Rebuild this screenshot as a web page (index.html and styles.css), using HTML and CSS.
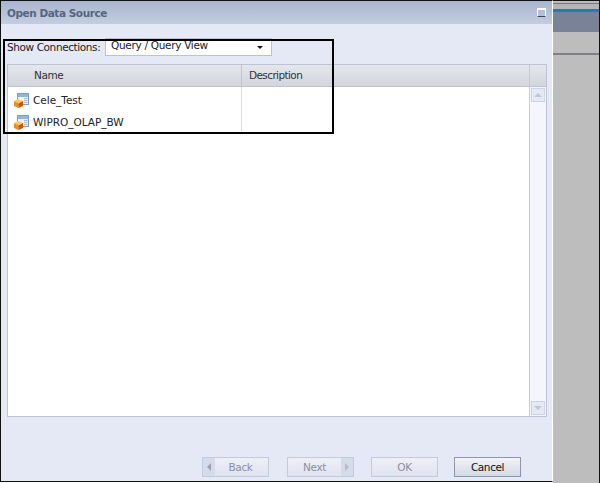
FILE: index.html
```html
<!DOCTYPE html>
<html lang="en">
<head>
<meta charset="utf-8">
<title>Open Data Source</title>
<link rel="stylesheet" href="styles.css">
</head>
<body>
<svg class="defs" width="0" height="0" aria-hidden="true">
  <symbol id="conn" viewBox="0 0 16 16">
    <rect x="3.500" y="1.500" width="11" height="11" fill="#eef3fb" stroke="#7f9cc2"/>
    <rect x="4" y="2" width="10" height="3" fill="#8fb4de"/>
    <rect x="10" y="6" width="3.500" height="1" fill="#a9bad0"/>
    <rect x="10" y="8" width="3.500" height="1" fill="#a9bad0"/>
    <rect x="10" y="10" width="3.500" height="1" fill="#a9bad0"/>
    <path d="M0 9 L4 7 L9 9 L4.500 11.500 Z" fill="#fcc95f"/>
    <path d="M0 9 L4.500 11.500 V16 L0 14 Z" fill="#f28c12"/>
    <path d="M9 9 L4.500 11.500 V16 L9 14 Z" fill="#c9560f"/>
  </symbol>
</svg>
<div class="screen">
  <main class="dialog">
    <header class="titlebar">
      <h1 class="title">Open Data Source</h1>
      <span class="maximize"></span>
    </header>
    <div class="body">
      <div class="connections">
        <label class="conn-label">Show Connections:</label>
        <div class="select">
          <span>Query / Query View</span>
          <span class="caret"></span>
        </div>
      </div>
      <div class="table">
        <div class="thead">
          <div class="th th-name">Name</div>
          <div class="th th-desc">Description</div>
          <div class="th th-end"></div>
        </div>
        <div class="tbody">
          <div class="rows">
            <div class="grid-line"></div>
            <div class="row">
              <svg class="row-icon"><use href="#conn"/></svg>
              <span>Cele_Test</span>
            </div>
            <div class="row">
              <svg class="row-icon"><use href="#conn"/></svg>
              <span>WIPRO_OLAP_BW</span>
            </div>
          </div>
          <div class="scrollbar">
            <div class="scroll-btn"><span class="arrow-up"></span></div>
            <div class="scroll-btn"><span class="arrow-down"></span></div>
          </div>
        </div>
      </div>
      <footer class="footer">
        <button class="btn btn-back" disabled><span class="btn-cap"><span class="arrow-left"></span></span><span class="btn-text">Back</span></button>
        <button class="btn btn-next" disabled><span class="btn-text">Next</span><span class="btn-cap"><span class="arrow-right"></span></span></button>
        <button class="btn btn-ok" disabled><span class="btn-text">OK</span></button>
        <button class="btn btn-cancel"><span class="btn-text">Cancel</span></button>
      </footer>
    </div>
  </main>
  <aside class="side">
    <div class="side-bar"></div>
    <div class="side-rule"></div>
  </aside>
</div>
<div class="annotation"></div>
</body>
</html>
```
FILE: styles.css
```css
* { box-sizing: border-box; }
html, body { margin: 0; padding: 0; }
body {
  width: 600px;
  height: 483px;
  overflow: hidden;
  position: relative;
  background: #fff;
  font-family: "DejaVu Sans", "Liberation Sans", sans-serif;
  font-size: 10px;
  color: #222;
}
.defs { position: absolute; }
.screen { display: flex; width: 600px; height: 483px; }
.dialog {
  width: 553px;
  height: 482px;
  display: flex;
  flex-direction: column;
  background: #e5e9f5;
  border-top: 1px solid #111;
  border-left: 1px solid #111;
  border-bottom: 1px solid #111;
  border-right: 1px solid #fff;
}
.titlebar {
  height: 23px;
  flex: none;
  display: flex;
  align-items: center;
  justify-content: space-between;
  padding: 0 6px 0 6px;
  background: linear-gradient(#a9b5cf, #c4cde0);
}
.title {
  margin: 0;
  font-size: 10.500px;
  font-weight: bold;
  color: #56657f;
  letter-spacing: -0.45px;
}
.maximize {
  width: 9px;
  height: 9px;
  border: 1px solid #fff;
  border-top-width: 2px;
  border-bottom: 1px solid #445;
  background: #b4bfd6;
}
.body {
  flex: 1;
  display: flex;
  flex-direction: column;
  padding: 14px 6px 0 6px;
}
.connections { display: flex; align-items: flex-start; height: 18px; }
.conn-label { font-size: 10.500px; padding-top: 3px; width: 98px; letter-spacing: -0.4px; }
.select {
  width: 167px;
  height: 18px;
  background: #fff;
  border: 1px solid #b9c2d6;
  display: flex;
  justify-content: space-between;
  font-size: 10.500px;
  letter-spacing: -0.3px;
  padding: 0 8px 0 5px;
}
.caret {
  margin-top: 7px;
  border-left: 3px solid transparent;
  border-right: 3px solid transparent;
  border-top: 3px solid #111;
}
.table {
  margin-top: 8px;
  width: 540px;
  height: 353px;
  border: 1px solid #bcc4d4;
  display: flex;
  flex-direction: column;
  background: #fff;
}
.thead {
  display: flex;
  height: 22px;
  flex: none;
  background: linear-gradient(#e5e7ee, #d2d5db);
  border-bottom: 1px solid #bcc4d4;
}
.th {
  font-size: 10.500px;
  letter-spacing: -0.4px;
  padding-top: 4px;
  color: #333;
}
.th-name { width: 234px; padding-left: 26px; border-right: 1px solid #bcc4d4; }
.th-desc { width: 288px; padding-left: 7px; border-right: 1px solid #c4cbd8; letter-spacing: -0.6px; }
.th-end { flex: 1; }
.tbody { flex: 1; display: flex; min-height: 0; }
.rows { position: relative; flex: 1; padding-top: 2px; }
.grid-line {
  position: absolute;
  left: 233px;
  top: 0;
  width: 1px;
  height: 44px;
  background: #d5dae4;
}
.row {
  height: 22px;
  display: flex;
  align-items: center;
  gap: 3px;
  padding-left: 6px;
  font-size: 10.500px;
  letter-spacing: -0.02px;
  color: #222;
}
.row-icon { width: 16px; height: 16px; flex: none; }
.scrollbar {
  width: 17px;
  flex: none;
  background: #f4f6fd;
  border-left: 1px solid #c4cbd8;
  display: flex;
  flex-direction: column;
  justify-content: space-between;
  padding: 1px;
}
.scroll-btn {
  height: 14px;
  background: #e5e9f5;
  border: 1px solid #ccd3e2;
  display: flex;
  align-items: center;
  justify-content: center;
}
.arrow-up {
  border-left: 4px solid transparent;
  border-right: 4px solid transparent;
  border-bottom: 4px solid #c3c7d0;
}
.arrow-down {
  border-left: 4px solid transparent;
  border-right: 4px solid transparent;
  border-top: 4px solid #c3c7d0;
}
.footer {
  display: flex;
  margin-top: 40px;
  padding-left: 195px;
}
.btn {
  width: 67px;
  height: 20px;
  padding: 0;
  display: flex;
  align-items: center;
  font-family: inherit;
  font-size: 10.500px;
  letter-spacing: -0.4px;
  color: #8a8f9c;
  border: 1px solid #c3cad9;
  background: linear-gradient(#eef0f8, #dfe3ef);
}
.btn-back { margin-right: 18px; }
.btn-next { margin-right: 17px; }
.btn-ok { margin-right: 16px; }
.btn-text { flex: 1; text-align: center; }
.btn-back .btn-text { padding-right: 2px; }
.btn-cap {
  width: 12px;
  height: 18px;
  flex: none;
  background: #d5dbe8;
  display: flex;
  align-items: center;
  justify-content: center;
}
.arrow-left {
  border-top: 4px solid transparent;
  border-bottom: 4px solid transparent;
  border-right: 4px solid #9aa2b2;
}
.arrow-right {
  border-top: 4px solid transparent;
  border-bottom: 4px solid transparent;
  border-left: 4px solid #b5bccb;
}
.btn-cancel {
  color: #111;
  border: 1px solid #8e97aa;
  background: linear-gradient(#f2f3f8, #d5d9e5);
}
.side {
  width: 47px;
  height: 483px;
  flex: none;
  background: #bdbdbd;
  border-top: 1px solid #111;
  border-right: 1px solid #111;
  padding-top: 2px;
}
.side-bar {
  height: 29px;
  background: linear-gradient(#77777c 0, #77777c 1px, #b5b5b8 1px, #b5b5b8 6px, #1f7fb5 6px, #1f7fb5 9px, #7a8298 9px);
}
.side-rule {
  height: 2px;
  margin-top: 21px;
  background: #7f7f86;
}
.annotation {
  position: absolute;
  left: 3px;
  top: 39px;
  width: 331px;
  height: 95px;
  border: 2px solid #000;
  pointer-events: none;
}
```
